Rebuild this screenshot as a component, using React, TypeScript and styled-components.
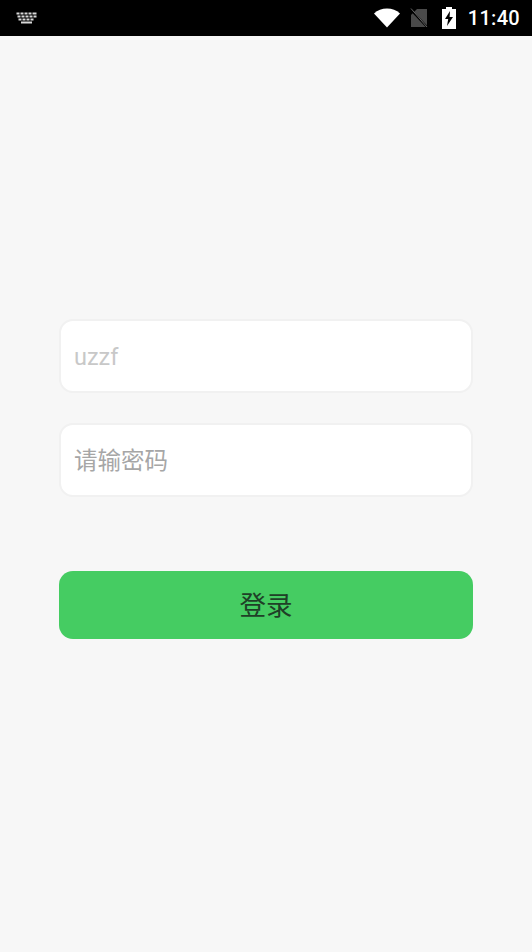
import React from "react";
import styled, { createGlobalStyle } from "styled-components";

const GlobalStyle = createGlobalStyle`
  html, body {
    margin: 0;
    padding: 0;
    background: #f7f7f7;
    font-family: "Roboto", "Noto Sans CJK SC", sans-serif;
  }
`;

const Page = styled.div`
  width: 532px;
  height: 952px;
  overflow: hidden;
  background: #f7f7f7;
  display: flex;
  flex-direction: column;
`;

const StatusBar = styled.div`
  height: 36px;
  background: #000;
  display: flex;
  align-items: center;
  padding: 0 12px 0 16px;
  box-sizing: border-box;
  flex-shrink: 0;
`;

const StatusIcons = styled.div`
  margin-left: auto;
  display: flex;
  align-items: center;
`;

const WifiIcon = styled.svg`
  width: 26px;
  height: 20px;
`;

const SimIcon = styled.svg`
  width: 18px;
  height: 20px;
  margin-left: 10px;
`;

const BatteryIcon = styled.svg`
  width: 14px;
  height: 22px;
  margin-left: 14px;
`;

const Clock = styled.span`
  color: #fff;
  font-size: 20px;
  font-weight: 500;
  line-height: 36px;
  letter-spacing: 0.3px;
  margin-left: 12px;
`;

const Form = styled.form`
  display: flex;
  flex-direction: column;
  margin: 283px 59px 0;
`;

const Field = styled.div`
  height: 74px;
  box-sizing: border-box;
  background: #fff;
  border: 2px solid #f1f1f1;
  border-radius: 14px;
  margin: 0 0 30px 0;
  padding: 1px 13px 0;
  display: flex;
  align-items: center;
`;

const Input = styled.input`
  border: none;
  outline: none;
  background: transparent;
  width: 100%;
  padding: 0;
  font-family: "Roboto", "Noto Sans CJK SC", sans-serif;
  font-size: 23.5px;
  color: #c8c8c8;
  &::placeholder {
    color: #a6a6a6;
    opacity: 1;
  }
`;

const LoginButton = styled.button`
  height: 68px;
  margin-top: 44px;
  border: none;
  border-radius: 14px;
  background: #45cc62;
  color: #1f3f27;
  font-family: "Noto Sans CJK SC", sans-serif;
  font-size: 26.5px;
  padding: 0 0 4px;
`;

const App: React.FC = () => {
  return (
    <Page>
      <GlobalStyle />
      <StatusBar>
        <svg width="22" height="12" viewBox="0 0 22 12" fill="#d8d8d8">
          <rect x="0.5" y="0.5" width="3" height="2" />
          <rect x="4.5" y="0.5" width="3" height="2" />
          <rect x="8.5" y="0.5" width="3" height="2" />
          <rect x="12.5" y="0.5" width="3" height="2" />
          <rect x="16.5" y="0.5" width="4" height="2" />
          <rect x="1.5" y="3.5" width="3" height="2" />
          <rect x="5.5" y="3.5" width="3" height="2" />
          <rect x="9.5" y="3.5" width="3" height="2" />
          <rect x="13.5" y="3.5" width="3" height="2" />
          <rect x="17.5" y="3.5" width="3" height="2" />
          <rect x="2.5" y="6.5" width="3" height="2" />
          <rect x="6.5" y="6.5" width="3" height="2" />
          <rect x="10.5" y="6.5" width="3" height="2" />
          <rect x="14.5" y="6.5" width="3" height="2" />
          <rect x="5" y="9.5" width="11" height="2" />
        </svg>
        <StatusIcons>
          <WifiIcon viewBox="0 0 26 20" fill="#fff">
            <path d="M0 5.5C3.5 2.2 8 0.5 13 0.5s9.5 1.7 13 5L13 19.5z" />
          </WifiIcon>
          <SimIcon viewBox="0 0 18 20">
            <path d="M7 1h10v18H1V7z" fill="#4a4a4a" />
            <path d="M0 1l18 19" stroke="#000" strokeWidth="2" />
            <path d="M1 0.5l16 18.5" stroke="#666" strokeWidth="1" />
          </SimIcon>
          <BatteryIcon viewBox="0 0 14 22">
            <path d="M4 0h6v2h4v20H0V2h4z" fill="#fff" />
            <path d="M8 4L3 12h3.2L5 19l6-9H7.6z" fill="#000" />
          </BatteryIcon>
          <Clock>11:40</Clock>
        </StatusIcons>
      </StatusBar>
      <Form>
        <Field>
          <Input type="text" defaultValue="uzzf" />
        </Field>
        <Field>
          <Input type="password" placeholder="请输密码" />
        </Field>
        <LoginButton type="button">登录</LoginButton>
      </Form>
    </Page>
  );
};

export default App;
